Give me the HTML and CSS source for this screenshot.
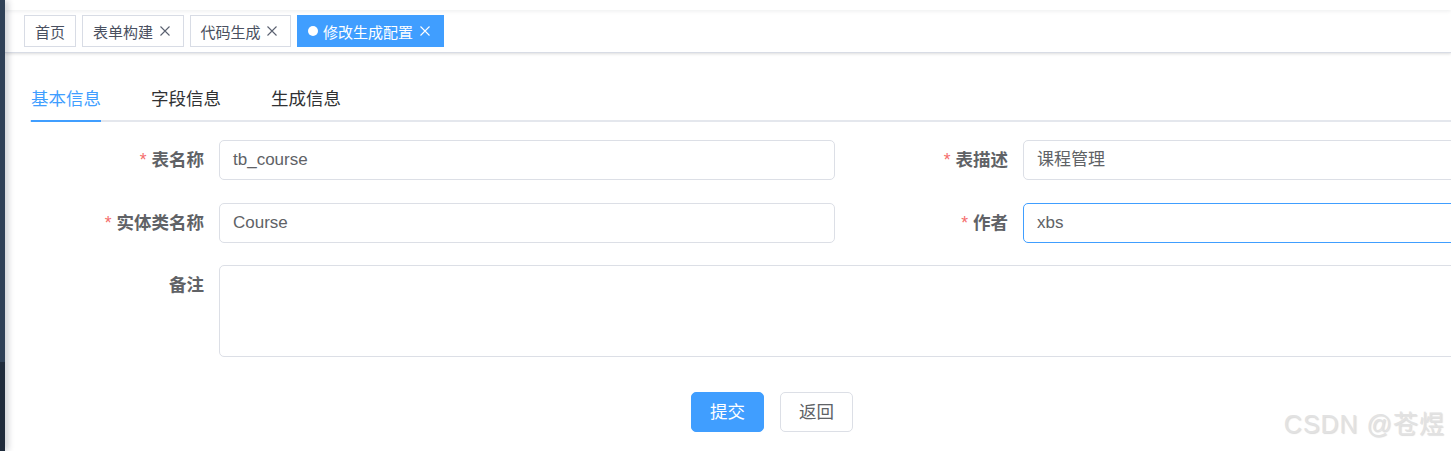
FILE: index.html
```html
<!DOCTYPE html>
<html lang="zh-CN">
<head>
<meta charset="utf-8">
<title>修改生成配置</title>
<link rel="stylesheet" href="styles.css">
</head>
<body>
<div class="layout">
  <aside class="sidebar"></aside>
  <div class="main">
    <div class="navbar"></div>
    <div class="tags-view">
      <span class="tag">首页</span>
      <span class="tag">表单构建<span class="tag-close"><svg viewBox="0 0 16 16" width="16" height="16"><path d="M3.5 3.5 L12.5 12.5 M12.5 3.5 L3.5 12.5"/></svg></span></span>
      <span class="tag">代码生成<span class="tag-close"><svg viewBox="0 0 16 16" width="16" height="16"><path d="M3.5 3.5 L12.5 12.5 M12.5 3.5 L3.5 12.5"/></svg></span></span>
      <span class="tag tag-active"><span class="tag-dot"></span>修改生成配置<span class="tag-close"><svg viewBox="0 0 16 16" width="16" height="16"><path d="M3.5 3.5 L12.5 12.5 M12.5 3.5 L3.5 12.5"/></svg></span></span>
    </div>
    <div class="app-container">
      <div class="tabs-header">
        <div class="tab tab-active">基本信息</div>
        <div class="tab">字段信息</div>
        <div class="tab">生成信息</div>
      </div>
      <div class="form">
        <div class="form-row">
          <div class="form-item">
            <label class="form-label"><span class="req">*</span>表名称</label>
            <div class="form-control"><div class="input">tb_course</div></div>
          </div>
          <div class="form-item">
            <label class="form-label"><span class="req">*</span>表描述</label>
            <div class="form-control"><div class="input">课程管理</div></div>
          </div>
        </div>
        <div class="form-row">
          <div class="form-item">
            <label class="form-label"><span class="req">*</span>实体类名称</label>
            <div class="form-control"><div class="input">Course</div></div>
          </div>
          <div class="form-item">
            <label class="form-label"><span class="req">*</span>作者</label>
            <div class="form-control"><div class="input input-focus">xbs</div></div>
          </div>
        </div>
        <div class="form-row form-row-full">
          <div class="form-item">
            <label class="form-label">备注</label>
            <div class="form-control"><div class="textarea"></div></div>
          </div>
        </div>
      </div>
      <div class="actions">
        <button class="btn btn-primary">提交</button>
        <button class="btn">返回</button>
      </div>
    </div>
  </div>
</div>
<div class="watermark">CSDN @苍煜</div>
</body>
</html>
```
FILE: styles.css
```css
* { box-sizing: border-box; }
html, body {
  margin: 0;
  padding: 0;
  width: 1451px;
  height: 451px;
  overflow: hidden;
  background: #fff;
  font-family: "Liberation Sans", "Noto Sans CJK SC", sans-serif;
}
.layout {
  display: flex;
  height: 451px;
}
.sidebar {
  width: 5px;
  flex: none;
  background: linear-gradient(to bottom, #2f4157 0, #2f4157 362px, #1f2b3b 362px);
  box-shadow: 2px 0 7px rgba(0, 21, 41, 0.30);
  position: relative;
  z-index: 3;
}
.main {
  flex: 1;
  min-width: 0;
  overflow: hidden;
  background: #fff;
}
.navbar {
  height: 10px;
  background: #fff;
  box-shadow: 0 1px 4px rgba(0, 21, 41, 0.08);
  position: relative;
  z-index: 2;
}
.tags-view {
  height: 43px;
  background: #fff;
  border-bottom: 1px solid #d8dce5;
  box-shadow: 0 1px 3px 0 rgba(0, 0, 0, 0.12), 0 0 3px 0 rgba(0, 0, 0, 0.04);
  display: flex;
  align-items: flex-start;
  padding: 5px 0 0 19px;
  gap: 6px;
  position: relative;
  z-index: 1;
}
.tag {
  display: inline-flex;
  align-items: center;
  height: 32px;
  padding: 0 10px;
  border: 1px solid #d8dce5;
  background: #fff;
  color: #495060;
  font-size: 15px;
  white-space: nowrap;
}
.tag-close {
  display: inline-flex;
  width: 16px;
  height: 16px;
  margin-left: 3.5px;
}
.tag-close svg path {
  stroke: #5a6170;
  stroke-width: 1.1;
  fill: none;
}
.tag-active {
  background: #409eff;
  border-color: #409eff;
  color: #fff;
}
.tag-active .tag-close svg path { stroke: #fff; }
.tag-dot {
  width: 10px;
  height: 10px;
  border-radius: 50%;
  background: #fff;
  margin-right: 5px;
}
.app-container {
  padding: 19px 0 0 25px;
  width: 1640px;
}
.tabs-header {
  display: flex;
  gap: 50px;
  height: 50px;
  padding-left: 1px;
  border-bottom: 2px solid #e4e7ed;
  margin-bottom: 18px;
}
.tab {
  height: 50px;
  padding-top: 4px;
  line-height: 46px;
  font-size: 17.5px;
  color: #303133;
  margin-bottom: -2px;
  border-bottom: 2px solid transparent;
}
.tab-active {
  color: #409eff;
  border-bottom-color: #409eff;
}
.form {
  width: 1610px;
  padding-left: 1px;
}
.form-row {
  display: grid;
  grid-template-columns: 804px 804px;
}
.form-row-full {
  grid-template-columns: 1608px;
}
.form-item {
  display: flex;
  margin-bottom: 22.5px;
}
.form-label {
  width: 188px;
  flex: none;
  text-align: right;
  padding-right: 15px;
  line-height: 40px;
  font-size: 17.5px;
  font-weight: 700;
  color: #606266;
}
.req {
  color: #f56c6c;
  margin-right: 5px;
  font-weight: 400;
}
.form-control {
  flex: 1;
  min-width: 0;
}
.input {
  height: 40px;
  line-height: 38px;
  border: 1px solid #dcdfe6;
  border-radius: 5px;
  padding: 0 13px;
  font-size: 17px;
  color: #606266;
  background: #fff;
}
.input-focus {
  border-color: #409eff;
}
.textarea {
  height: 92px;
  border: 1px solid #dcdfe6;
  border-radius: 5px;
  background: #fff;
}
.actions {
  margin-left: -131px;
  margin-top: 12px;
  display: flex;
  justify-content: center;
  gap: 16px;
}
.btn {
  height: 40px;
  padding: 0 18px;
  border: 1px solid #dcdfe6;
  border-radius: 5px;
  background: #fff;
  color: #606266;
  font-family: "Liberation Sans", "Noto Sans CJK SC", sans-serif;
  font-size: 17.5px;
  line-height: 38px;
}
.btn-primary {
  background: #409eff;
  border-color: #409eff;
  color: #fff;
}
.watermark {
  position: absolute;
  right: 6px;
  bottom: 11px;
  font-size: 25px;
  letter-spacing: 1px;
  color: #e2e2e2;
  text-shadow: 1px 1px 1px rgba(0, 0, 0, 0.14);
  font-family: "Liberation Sans", "Noto Sans CJK SC", sans-serif;
}
```
